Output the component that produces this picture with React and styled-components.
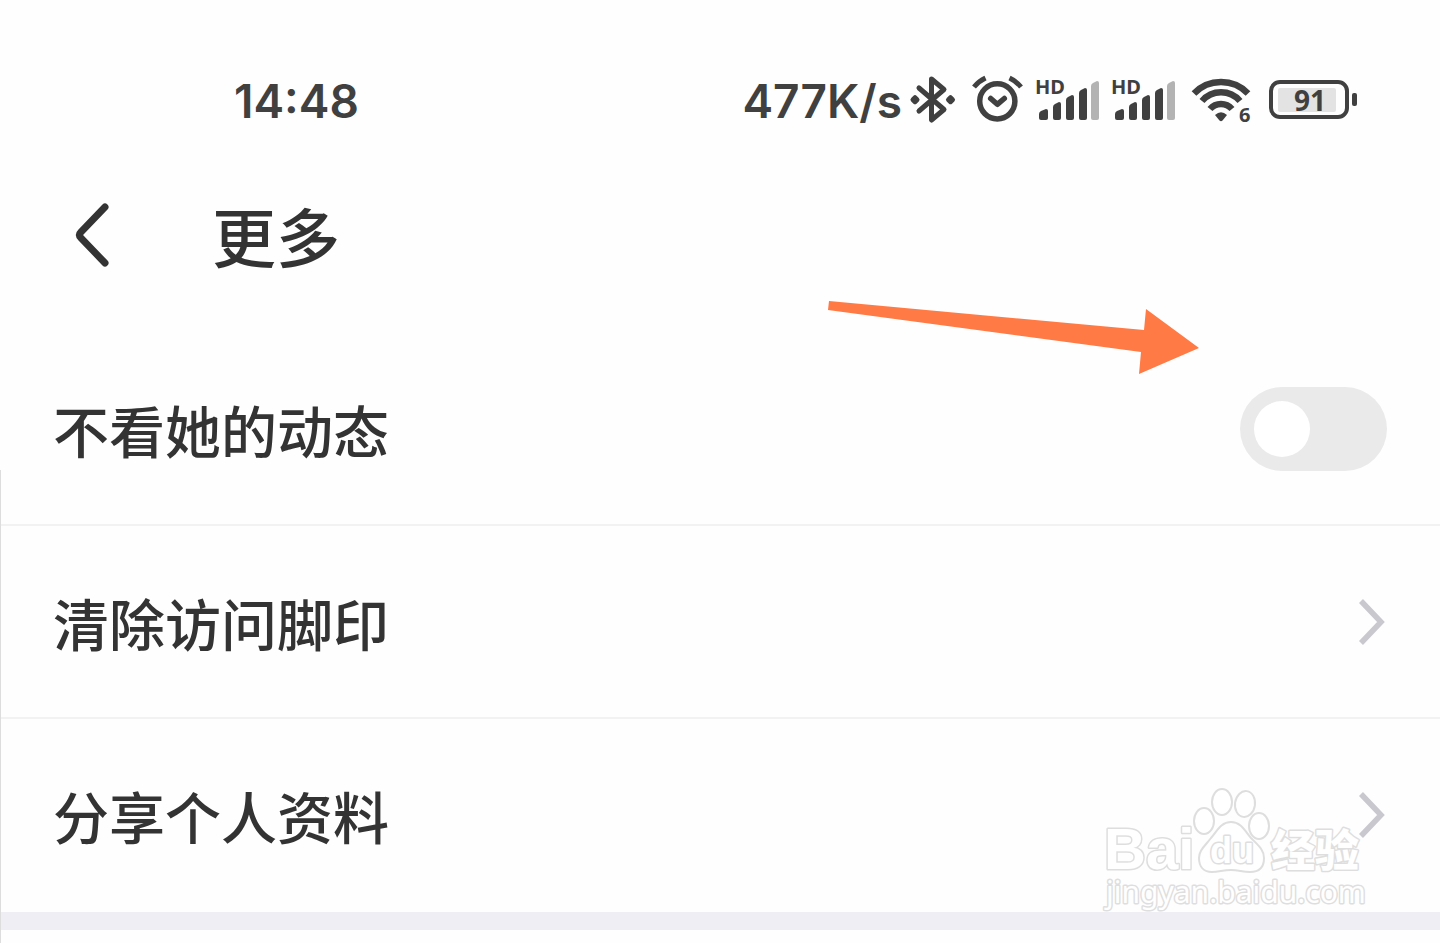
import { useState } from 'react'
import styled, { createGlobalStyle } from 'styled-components'

const bars = [
  { x: 3, w: 9, top: 33 },
  { x: 17, w: 8, top: 26 },
  { x: 30, w: 8, top: 19 },
  { x: 43, w: 8, top: 12 },
  { x: 55, w: 8, top: 5, faded: true },
]

const BluetoothIcon = () => (
  <Icon width="48" height="48" viewBox="0 0 48 48" aria-label="bluetooth">
    <path
      d="M9 12 L34 33.5 L21.5 44 V3 L34 13.5 L9 35"
      fill="none"
      stroke="#404040"
      strokeWidth="5"
      strokeLinecap="round"
      strokeLinejoin="round"
    />
    <path
      d="M3 23.7 L5 21.7 L7 23.7 L5 25.7 Z M38.5 23.7 L40.5 21.7 L42.5 23.7 L40.5 25.7 Z"
      fill="#404040"
      stroke="#404040"
      strokeWidth="5"
      strokeLinejoin="round"
    />
  </Icon>
)

const AlarmIcon = () => (
  <Icon width="50" height="48" viewBox="0 0 50 48" aria-label="alarm">
    <g fill="none" stroke="#404040" strokeWidth="5.5" strokeLinecap="round" strokeLinejoin="round">
      <circle cx="25.3" cy="25.3" r="17.6" />
      <path d="M18.7 22.5 L25.3 28.3 L32.3 22.5" />
    </g>
    <g fill="none" stroke="#404040" strokeWidth="5">
      <path d="M2 11 Q7 5 13.5 2" />
      <path d="M37.5 2 Q44 5 49 11" />
    </g>
  </Icon>
)

const SignalIcon = () => (
  <Icon width="62" height="48" viewBox="0 0 62 48" aria-label="signal">
    <SvgText x="-1" y="18" $size={20}>HD</SvgText>
    {bars.map(({ x, w, top, faded }) => (
      <path
        key={x}
        d={`M${x} ${top + 5} Q${x} ${top + 3} ${x + 2} ${top + 2} L${x + w - 2} ${top} Q${x + w} ${top} ${x + w} ${top + 2} V42 Q${x + w} 44 ${x + w - 2} 44 H${x + 2} Q${x} 44 ${x} 42 Z`}
        fill={faded ? '#b3b3b3' : '#404040'}
      />
    ))}
  </Icon>
)

const WifiIcon = () => (
  <Icon width="66" height="48" viewBox="0 0 66 48" aria-label="wifi">
    <g fill="none" stroke="#404040" strokeWidth="6.5">
      <path d="M6 17.5 A37.5 37.5 0 0 1 60 17.5" />
      <path d="M14 25 A25 25 0 0 1 52 25" />
      <path d="M22 33 A14.5 14.5 0 0 1 44 33" />
    </g>
    <path d="M27 39 Q33 33.5 39 39 L34.5 44.5 Q33 46 31.5 44.5 Z" fill="#404040" />
    <SvgText x="51" y="46" $size={20}>6</SvgText>
  </Icon>
)

const BatteryIcon = () => (
  <Icon width="90" height="48" viewBox="0 0 90 48" aria-label="battery">
    <rect x="3" y="6" width="76" height="35" rx="9" fill="none" stroke="#404040" strokeWidth="4" />
    <rect x="10" y="12" width="58" height="24" rx="2" fill="#e3e3e3" />
    <rect x="84" y="17" width="5" height="13" rx="2" fill="#404040" />
    <SvgText x="26" y="35" $size={28}>91</SvgText>
  </Icon>
)

const Chevron = () => (
  <svg width="28" height="48" viewBox="0 0 28 48">
    <path d="M2 3 L22 24 L2 45" fill="none" stroke="#c8c8ce" strokeWidth="5.5" />
  </svg>
)

const Watermark = () => (
  <WatermarkSvg width="264" height="128" viewBox="0 0 264 128">
    <g fill="#fff" stroke="#dedede" strokeWidth="2">
      <ellipse cx="101" cy="33" rx="10" ry="13" />
      <ellipse cx="119" cy="14" rx="10" ry="13" />
      <ellipse cx="142" cy="16" rx="10" ry="13" transform="rotate(8 142 16)" />
      <ellipse cx="156" cy="38" rx="10" ry="13" />
      <path d="M128 34 C138 34 142 43 148 50 C156 58 161 62 161 70 C161 80 155 84 147 84 C139 84 136 82 128 82 C120 82 116 84 109 84 C101 84 96 79 96 70 C96 62 102 58 108 50 C114 43 118 34 128 34 Z" />
    </g>
    <OutlineText x="1" y="81" $size={58} $weight={700}>Bai</OutlineText>
    <OutlineText x="107" y="75" $size={36} $weight={700}>du</OutlineText>
    <OutlineText x="168" y="79" $size={44} $weight={900}>经验</OutlineText>
    <OutlineText x="3" y="115" $size={30} $weight={400} $url>jingyan.baidu.com</OutlineText>
  </WatermarkSvg>
)

const App = () => {
  const [hidden, setHidden] = useState(false)

  return (
    <Page>
      <GlobalStyle />
      <StatusBar>
        <StatusText>14:48</StatusText>
        <StatusRight>
          <StatusText>477K/s</StatusText>
          <StatusIcons>
            <BluetoothIcon />
            <AlarmIcon />
            <SignalIcon />
            <SignalIcon />
            <WifiIcon />
            <BatteryIcon />
          </StatusIcons>
        </StatusRight>
      </StatusBar>
      <Header>
        <BackButton aria-label="返回">
          <svg width="38" height="68" viewBox="0 0 38 68">
            <path
              d="M31 7 L7 32 Q4 35 7 38 L31 63"
              fill="none"
              stroke="#333"
              strokeWidth="7"
              strokeLinecap="round"
              strokeLinejoin="round"
            />
          </svg>
        </BackButton>
        <Title>更多</Title>
        <Arrow width="372" height="76" viewBox="0 0 372 76">
          <path d="M1 1 L316 30 L318 9 L371 48 L311 74 L313 52 L0 10 Z" fill="#ff7a45" />
        </Arrow>
      </Header>
      <List>
        <Row as="label">
          不看她的动态
          <Toggle
            type="checkbox"
            checked={hidden}
            onChange={(e) => setHidden(e.target.checked)}
          />
        </Row>
        <Row>
          清除访问脚印
          <Chevron />
        </Row>
        <Row $last>
          分享个人资料
          <Chevron />
        </Row>
        <Watermark />
      </List>
      <Divider />
    </Page>
  )
}

const GlobalStyle = createGlobalStyle`
  * {
    box-sizing: border-box;
  }
  body {
    margin: 0;
    background: #fefefe;
    font-family: "Noto Sans CJK SC", sans-serif;
    color: #333;
  }
`

const Page = styled.div`
  min-height: 100vh;
  overflow: hidden;
`

const StatusBar = styled.div`
  display: flex;
  justify-content: space-between;
  align-items: center;
  padding: 76px 82px 62px 234px;
`

const StatusRight = styled.div`
  display: flex;
  align-items: center;
  gap: 8px;
`

const StatusIcons = styled.div`
  display: flex;
  align-items: center;
  gap: 14px;
`

const StatusText = styled.span`
  padding-top: 2px;
  font-family: Inter, "Noto Sans", sans-serif;
  font-size: 46px;
  line-height: 46px;
  font-weight: 600;
  color: #404040;
`

const Icon = styled.svg`
  display: block;
  overflow: visible;
`

const SvgText = styled.text`
  font-family: "Noto Sans", sans-serif;
  font-size: ${({ $size }) => $size}px;
  font-weight: 700;
  fill: #404040;
`

const Header = styled.header`
  position: relative;
  display: flex;
  align-items: center;
  gap: 100px;
  height: 96px;
  margin-bottom: 51px;
  padding: 0 74px;
`

const BackButton = styled.button`
  display: flex;
  padding: 0;
  border: none;
  background: none;
  cursor: pointer;
`

const Title = styled.h1`
  margin: 0;
  font-size: 64px;
  line-height: 94px;
  font-weight: 500;
`

const Arrow = styled.svg`
  position: absolute;
  top: 114px;
  right: 240px;
`

const List = styled.div`
  position: relative;

  &::before {
    content: "";
    position: absolute;
    top: 137px;
    bottom: -40px;
    left: 0;
    width: 1px;
    background: #ddd;
  }
`

const Row = styled.button`
  display: flex;
  justify-content: space-between;
  align-items: center;
  width: 100%;
  height: 193px;
  padding: 0 53px;
  border: none;
  border-bottom: 2px solid ${({ $last }) => ($last ? 'transparent' : '#f2f2f2')};
  background: none;
  font-family: inherit;
  font-size: 56px;
  line-height: 80px;
  font-weight: 500;
  color: inherit;
  text-align: left;
  cursor: pointer;
`

const Toggle = styled.input`
  appearance: none;
  width: 147px;
  height: 84px;
  margin: 0;
  padding: 14px;
  border-radius: 42px;
  background: ${({ checked }) => (checked ? '#ff7a45' : '#eaeaea')};
  cursor: pointer;

  &::before {
    content: "";
    display: block;
    width: 56px;
    height: 56px;
    margin-left: ${({ checked }) => (checked ? 'auto' : '0')};
    border-radius: 50%;
    background: #fff;
  }
`

const WatermarkSvg = styled.svg`
  position: absolute;
  right: 73px;
  bottom: -4px;
  overflow: visible;
  pointer-events: none;
`

const OutlineText = styled.text`
  font-family: ${({ $url }) => ($url ? '"Noto Sans"' : '"Liberation Sans", "Noto Sans CJK SC"')}, sans-serif;
  font-size: ${({ $size }) => $size}px;
  font-weight: ${({ $weight }) => $weight};
  fill: #fff;
  stroke: #dedede;
  stroke-width: 3px;
  stroke-linejoin: round;
  paint-order: stroke;
`

const Divider = styled.div`
  height: 18px;
  background: #eeeef4;
`

export default App
